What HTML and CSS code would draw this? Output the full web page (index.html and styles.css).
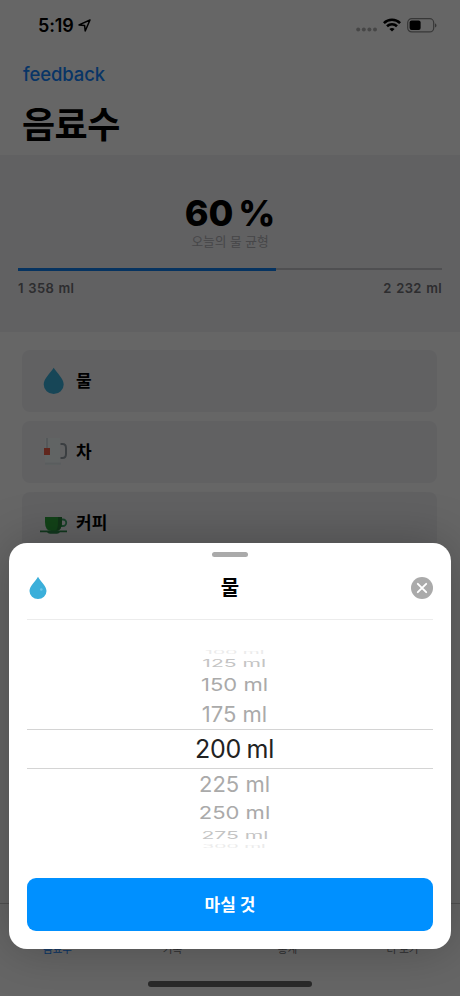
FILE: index.html
```html
<!DOCTYPE html>
<html lang="ko">
<head>
  <meta charset="UTF-8" />
  <meta name="viewport" content="width=device-width, initial-scale=1.0" />
  <title>음료수</title>
  <link rel="stylesheet" href="styles.css">
</head>
<body>
  <div class="app">
    <div class="status-bar">
      <div class="clock">
        <span>5:19</span>
        <svg width="13" height="13" viewBox="0 0 13 13" fill="none" stroke="#000" stroke-width="1.5" stroke-linejoin="round">
          <path d="M12 1 L1 5.9 L6.6 6.4 L7.2 12 Z" />
        </svg>
      </div>
      <div class="status-icons">
        <svg class="dots" width="22" height="5" viewBox="0 0 22 5" fill="#b0b0b0">
          <circle cx="2.2" cy="2.5" r="2" />
          <circle cx="7.8" cy="2.5" r="2" />
          <circle cx="13.4" cy="2.5" r="2" />
          <circle cx="19" cy="2.5" r="2" />
        </svg>
        <svg class="wifi" width="18" height="14" viewBox="0 0 18 14" fill="none" stroke="#000" stroke-width="2.6">
          <path d="M.9 5.1 C5.4 .7 12.6 .7 17.1 5.1" />
          <path d="M4 8.3 C6.8 5.6 11.2 5.6 14 8.3" />
          <path d="M9 13.6 L6.4 11 C7.8 9.7 10.2 9.7 11.6 11 Z" fill="#000" stroke="none" />
        </svg>
        <svg width="30" height="15" viewBox="0 0 30 15">
          <rect x=".7" y=".7" width="26" height="13.2" rx="4" fill="none" stroke="#8a8a8a" stroke-width="1.2" />
          <rect x="2.6" y="2.6" width="11" height="9.4" rx="2" />
          <path d="M28 5.2 C30 6 30 8.8 28 9.6 Z" fill="#8a8a8a" />
        </svg>
      </div>
    </div>

    <header class="header">
      <a class="feedback" href="#">feedback</a>
      <h1>음료수</h1>
    </header>

    <section class="balance">
      <div class="percent">60 %</div>
      <div class="caption">오늘의 물 균형</div>
      <div class="progress"><div class="progress-fill" style="width: 60.8%"></div></div>
      <div class="amounts">
        <span>1 358 ml</span>
        <span>2 232 ml</span>
      </div>
    </section>

    <main class="drinks">
      <div class="drink">
        <svg width="28" height="28" viewBox="0 0 28 28">
          <path d="M13.7 .7 C17 6 23.7 11.5 23.7 17.4 A10 9.6 0 0 1 3.7 17.4 C3.7 11.5 10.4 6 13.7 .7 Z" fill="#3bafda" />
        </svg>
        <span>물</span>
      </div>
      <div class="drink">
        <svg width="28" height="28" viewBox="0 0 28 28">
          <path d="M5 0 H20 V24 Q20 27 17 27 H8 Q5 27 5 24 Z" fill="#f3f9fb" />
          <path d="M5 25.6 H21" stroke="#e0e8ec" stroke-width="2" />
          <path d="M20.5 6 H22.5 Q26 6 26 10 V16 Q26 20 22.5 20 H20.5" fill="none" stroke="#959ca4" stroke-width="2" />
          <path d="M7 0 V10" stroke="#c6d0d6" stroke-width="1.4" />
          <rect x="4" y="10" width="6" height="7" fill="#f0604a" />
        </svg>
        <span>차</span>
      </div>
      <div class="drink">
        <svg width="28" height="28" viewBox="0 0 28 28">
          <path d="M21 10.5 H23 A2.7 2.7 0 0 1 23 17 H20" fill="none" stroke="#3fa56a" stroke-width="1.8" />
          <path d="M5 8 H22 V13 Q22 22 15.5 22 H11.5 Q5 22 5 13 Z" fill="#2da63c" />
          <path d="M18 8 H22 V13 Q22 22 15.5 22 Q18 20 18 13 Z" fill="#28803b" />
          <path d="M0 21.5 H27 V23.3 H20 Q19 24.7 17 24.7 H10 Q8 24.7 7 23.3 H0 Z" fill="#2f8a4d" />
        </svg>
        <span>커피</span>
      </div>
    </main>

    <nav class="tabs">
      <span class="active">음료수</span>
      <span>기록</span>
      <span>통계</span>
      <span>더 보기</span>
    </nav>
  </div>

  <div class="overlay"></div>

  <div class="home-indicator"></div>

  <div class="sheet">
    <div class="grabber"></div>
    <div class="sheet-header">
      <svg width="22" height="24" viewBox="0 0 22 24">
        <path d="M11 .8 C13.4 5.2 19.5 10.2 19.5 15 A8.5 8 0 0 1 2.5 15 C2.5 10.2 8.6 5.2 11 .8 Z" fill="#3bafda" />
        <circle cx="14.3" cy="13.5" r="1.3" fill="#6cc6e8" />
      </svg>
      <h2>물</h2>
      <button class="close" aria-label="닫기">
        <svg width="22" height="22" viewBox="0 0 22 22" stroke="#fff" stroke-width="1.9" stroke-linecap="round">
          <path d="M6.8 6.8 L15.2 15.2 M15.2 6.8 L6.8 15.2" />
        </svg>
      </button>
    </div>

    <div class="picker">
      <div class="row edge"><span>100 ml</span></div>
      <div class="row far"><span>125 ml</span></div>
      <div class="row mid"><span>150 ml</span></div>
      <div class="row near"><span>175 ml</span></div>
      <div class="row selected"><span>200 ml</span></div>
      <div class="row near"><span>225 ml</span></div>
      <div class="row mid"><span>250 ml</span></div>
      <div class="row far"><span>275 ml</span></div>
      <div class="row edge"><span>300 ml</span></div>
    </div>

    <button class="drink-button">마실 것</button>
  </div>
</body>
</html>
```

FILE: styles.css
```css
* {
  box-sizing: border-box;
}

body {
  margin: 0;
  height: 996px;
  position: relative;
  overflow: hidden;
  background: #fff;
  color: #000;
  font-family: Inter, "Noto Sans CJK KR", sans-serif;
}

h1, h2 {
  margin: 0;
}

svg {
  display: block;
}

button {
  border: none;
  padding: 0;
  font-family: inherit;
}

.app {
  height: 996px;
  display: flex;
  flex-direction: column;
}

.status-bar {
  height: 50px;
  padding: 0 23px 0 38px;
  display: flex;
  align-items: center;
  justify-content: space-between;
}

.clock {
  display: flex;
  align-items: center;
  gap: 4px;
  font-size: 18px;
  font-weight: 600;
  letter-spacing: -0.1px;
}

.status-icons {
  display: flex;
  align-items: center;
}

.dots {
  margin-top: 9px;
}

.wifi {
  margin: 0 6px 0 5px;
}

.header {
  height: 105px;
  padding: 12px 22px 0;
}

.feedback {
  display: block;
  line-height: 24px;
  padding-left: 1px;
  font-size: 18.5px;
  font-weight: 500;
  letter-spacing: -0.1px;
  color: #1485ff;
  text-decoration: none;
}

.header h1 {
  margin-top: 16px;
  line-height: 46px;
  font-size: 36px;
  font-weight: 700;
  letter-spacing: -0.5px;
}

.balance {
  height: 177px;
  padding: 37px 18px 0;
  background: #f2f2f6;
  text-align: center;
}

.percent {
  line-height: 42px;
  font-size: 36px;
  font-weight: 800;
  word-spacing: -3px;
}

.caption {
  line-height: 16px;
  font-size: 12.7px;
  color: #b0b0b4;
}

.progress {
  margin-top: 18px;
  height: 2px;
  background: #c6c6ca;
}

.progress-fill {
  height: 3px;
  background: #0f80f0;
}

.amounts {
  margin-top: 9px;
  display: flex;
  justify-content: space-between;
  line-height: 18px;
  font-size: 13px;
  font-weight: 600;
  letter-spacing: 0.3px;
  word-spacing: 1px;
  color: #707075;
}

.drinks {
  flex: 1;
  padding: 18px 23px 0 22px;
  display: flex;
  flex-direction: column;
  gap: 9px;
}

.drink {
  height: 62px;
  padding-left: 18px;
  display: flex;
  align-items: center;
  gap: 8px;
  border-radius: 8px;
  background: #f2f2f6;
  font-size: 17px;
  font-weight: 700;
}

.drink span {
  margin-bottom: 4px;
}

.tabs {
  height: 93px;
  padding-top: 38px;
  display: grid;
  grid-template-columns: repeat(4, 1fr);
  border-top: 1px solid #ccc;
  text-align: center;
  line-height: 16px;
  font-size: 10.5px;
  color: #77777b;
}

.tabs .active {
  color: #1485ff;
}

.overlay {
  position: absolute;
  inset: 0;
  background: rgba(0, 0, 0, 0.6);
}

.sheet {
  position: absolute;
  left: 9px;
  right: 9px;
  top: 543px;
  height: 406px;
  padding: 9px 18px 0;
  border-radius: 18px;
  background: #fff;
  box-shadow: 0 0 50px rgba(0, 0, 0, 0.25);
}

.grabber {
  width: 36px;
  height: 5px;
  margin: 0 auto;
  border-radius: 3px;
  background: #aaa;
}

.sheet-header {
  height: 63px;
  display: flex;
  align-items: center;
  justify-content: space-between;
  border-bottom: 1px solid #ececec;
}

.sheet-header h2 {
  font-size: 20px;
  line-height: 28px;
  font-weight: 700;
}

.close {
  width: 22px;
  height: 22px;
  border-radius: 50%;
  background: #aaa;
}

/* rows get flatter towards the ends, like a wheel */
.picker {
  height: 258px;
  padding-top: 29px;
}

.row {
  padding-left: 9px;
  display: flex;
  align-items: center;
  justify-content: center;
  overflow: hidden;
  font-size: 22px;
  line-height: 28px;
  color: #aaa;
}

.selected {
  height: 40px;
  border-top: 1px solid #d4d4d4;
  border-bottom: 1px solid #d4d4d4;
  font-size: 25px;
  letter-spacing: -0.3px;
  word-spacing: -1px;
  color: #222;
}

.near {
  height: 30px;
}

.mid {
  height: 28px;
}

.mid span {
  transform: scaleY(0.78);
}

.far {
  height: 16px;
  color: #c4c4c4;
}

.far span {
  transform: scale(0.96, 0.48);
}

.edge {
  height: 6px;
  color: #ebebeb;
}

.edge span {
  transform: scale(0.88, 0.2);
}

.drink-button {
  width: 100%;
  height: 53px;
  padding-bottom: 2px;
  border-radius: 9px;
  background: #0090ff;
  color: #fff;
  font-size: 17px;
  font-weight: 700;
}

.home-indicator {
  position: absolute;
  left: 148px;
  bottom: 9px;
  width: 164px;
  height: 6px;
  border-radius: 3px;
  background: #292929;
}
```
